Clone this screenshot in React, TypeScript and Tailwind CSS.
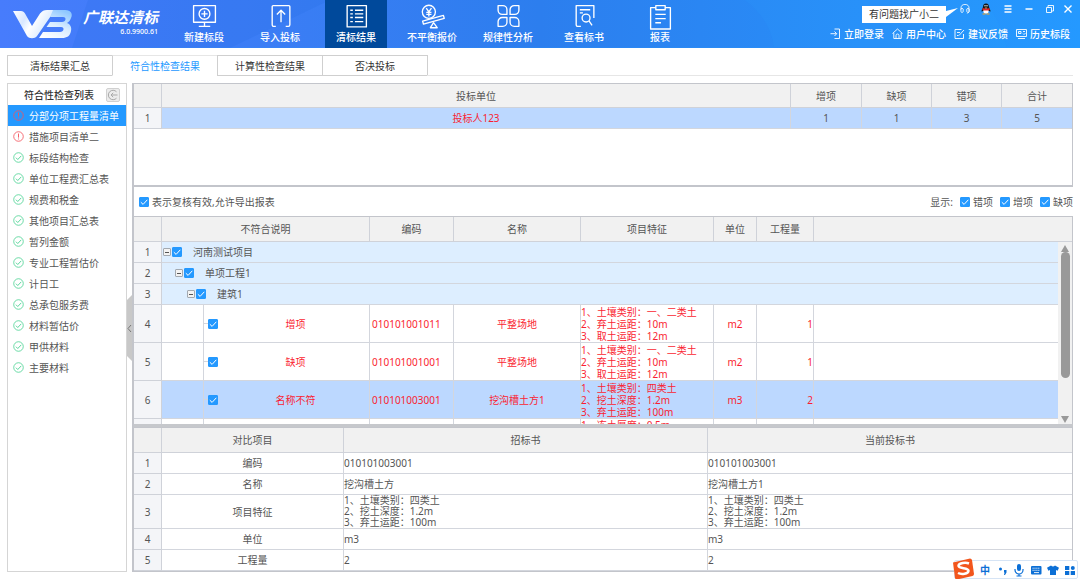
import { useState, type ReactNode } from "react";
import clsx from "clsx";

interface BillRow {
  id: number;
  reason: string;
  code: string;
  name: string;
  features: string[];
  unit: string;
  quantity: string;
}

const navItems = [
  { key: "new", label: "新建标段" },
  { key: "import", label: "导入投标" },
  { key: "result", label: "清标结果" },
  { key: "balance", label: "不平衡报价" },
  { key: "pattern", label: "规律性分析" },
  { key: "view", label: "查看标书" },
  { key: "report", label: "报表" }
];

const userLinks = [
  { key: "login", label: "立即登录" },
  { key: "home", label: "用户中心" },
  { key: "feedback", label: "建议反馈" },
  { key: "history", label: "历史标段" }
];

const tabs = ["清标结果汇总", "符合性检查结果", "计算性检查结果", "否决投标"];

const checks = [
  { label: "分部分项工程量清单", ok: false },
  { label: "措施项目清单二", ok: false },
  { label: "标段结构检查", ok: true },
  { label: "单位工程费汇总表", ok: true },
  { label: "规费和税金", ok: true },
  { label: "其他项目汇总表", ok: true },
  { label: "暂列金额", ok: true },
  { label: "专业工程暂估价", ok: true },
  { label: "计日工", ok: true },
  { label: "总承包服务费", ok: true },
  { label: "材料暂估价", ok: true },
  { label: "甲供材料", ok: true },
  { label: "主要材料", ok: true }
];

const treeRows = [
  { id: 1, label: "河南测试项目", indent: "pl-px" },
  { id: 2, label: "单项工程1", indent: "pl-[13px]" },
  { id: 3, label: "建筑1", indent: "pl-[25px]" }
];

const billRows: BillRow[] = [
  {
    id: 4,
    reason: "增项",
    code: "010101001011",
    name: "平整场地",
    features: ["1、土壤类别：一、二类土", "2、弃土运距：10m", "3、取土运距：12m"],
    unit: "m2",
    quantity: "1"
  },
  {
    id: 5,
    reason: "缺项",
    code: "010101001001",
    name: "平整场地",
    features: ["1、土壤类别：一、二类土", "2、弃土运距：10m", "3、取土运距：12m"],
    unit: "m2",
    quantity: "1"
  },
  {
    id: 6,
    reason: "名称不符",
    code: "010101003001",
    name: "挖沟槽土方1",
    features: ["1、土壤类别：四类土", "2、挖土深度：1.2m", "3、弃土运距：100m"],
    unit: "m3",
    quantity: "2"
  }
];

const compareRows = [
  { label: "编码", tender: ["010101003001"], bid: ["010101003001"] },
  { label: "名称", tender: ["挖沟槽土方"], bid: ["挖沟槽土方1"] },
  {
    label: "项目特征",
    tender: ["1、土壤类别：四类土", "2、挖土深度：1.2m", "3、弃土运距：100m"],
    bid: ["1、土壤类别：四类土", "2、挖土深度：1.2m", "3、弃土运距：100m"]
  },
  { label: "单位", tender: ["m3"], bid: ["m3"] },
  { label: "工程量", tender: ["2"], bid: ["2"] }
];

const cell = "border-r border-b border-[#d3d6dd]";
const headCell = "border-r border-b border-[#cfd2d9] bg-[#f1f1f1] font-normal";
const indexCell = "border-r border-b border-[#cfd2d9] bg-[#f4f5f8] text-center font-normal";

const navIcons: Record<string, ReactNode> = {
  new: (
    <>
      <path d="M1.5 1.5h21v16h-21zM12 17.5v3.5M6.500 21.500h11" />
      <circle cx="12" cy="9.500" r="5.200" />
      <path d="M12 6.500v6M9 9.500h6" />
    </>
  ),
  import: (
    <>
      <path d="M7.500 21.500H5.500a1.500 1.500 0 0 1-1.500-1.500V2.500A1 1 0 0 1 5 1.500h15a1 1 0 0 1 1 1v17.500a1.500 1.500 0 0 1-1.500 1.500H17" />
      <path d="M12.500 17.500V6M8.500 10l4-4 4 4" />
    </>
  ),
  result: (
    <>
      <path d="M3 1.500h18.500v20.500H3z" />
      <path d="M6 6h2.500M10.500 6H18.500M6 9.500h2.500M10.500 9.500H18.500M6 13h2.500M10.500 13H18.500M6 17h2.500M10.500 17H18.500" />
    </>
  ),
  balance: (
    <>
      <circle cx="8.500" cy="7.500" r="6.300" />
      <path d="M6 4l2.500 3.500L11 4M8.500 7.500v4.500M6 8h5M6 10h5" />
      <path d="M2.500 16.500L22.500 11l.8 2.800L3.300 19.300z" />
      <path d="M13 18l-3 4.800h6.500z" />
    </>
  ),
  pattern: (
    <>
      <path d="M2 1.500h4.500a4 4 0 0 1 4 4V10H6a4 4 0 0 1-4-4z" />
      <path d="M22 1.500h-4.500a4 4 0 0 0-4 4V10H18a4 4 0 0 0 4-4z" />
      <path d="M2 21.500h4.500a4 4 0 0 0 4-4V13H6a4 4 0 0 0-4 4z" />
      <path d="M22 21.500h-4.500a4 4 0 0 1-4-4V13H18a4 4 0 0 1 4 4z" />
    </>
  ),
  view: (
    <>
      <path d="M8.500 21.500H5.500a1.500 1.500 0 0 1-1.500-1.500V1.500h17v12" />
      <path d="M7.500 5.500h10M7.500 8.500h3" />
      <circle cx="13.500" cy="13.500" r="3.800" />
      <path d="M16.300 16.300l3 4.200" />
    </>
  ),
  report: (
    <>
      <path d="M7.500 3.500H2.500v20.500h19V3.500h-5" />
      <path d="M7.500 1.500h9v4h-9zM7 10h10M7 14h10M7 18h5.500" />
    </>
  )
};

const linkIcons: Record<string, ReactNode> = {
  login: <path d="M4.500 1h5v9.500h-5M.5 5.700h6M4.500 3.500l2.200 2.200-2.200 2.300" />,
  home: <path d="M.5 5.500L5.500 1l5 4.500M1.800 5v5.500h7.400V5M4 10.500V7.500a1.500 1.500 0 0 1 3 0v3" />,
  feedback: <path d="M7.500 1.500H1v9h8.500V6M3 4.500h3M3 7.500l1.500 0M5 7.500L10 2" />,
  history: (
    <path d="M.5 1.500h10v7H.5zM2 10.500h7M2.500 3.500h2.500v2H2.500zM7 3.500h2M7 5.500l1 1 1.500-1.500" />
  )
};

const Logo = () => (
  <svg viewBox="0 0 60 29" className="h-[29px] w-[60px]" aria-hidden="true">
    <defs>
      <linearGradient id="logo-v" x1="0" y1="0" x2="1" y2="0.4">
        <stop offset="0" stopColor="#ffffff" />
        <stop offset="0.35" stopColor="#d9e8ff" />
        <stop offset="0.55" stopColor="#ffffff" />
        <stop offset="1" stopColor="#cfe5ff" />
      </linearGradient>
      <linearGradient id="logo-b" x1="0.2" y1="1" x2="0.7" y2="0">
        <stop offset="0" stopColor="#ffffff" />
        <stop offset="0.5" stopColor="#d9edff" />
        <stop offset="1" stopColor="#8fc8ff" />
      </linearGradient>
    </defs>
    <path d="M0 1h8c2 0 3 1 4 2.500L19 16l8-12.500C29 1 31 0 34 0h8L24 26c-2 3-8 3-10 0z" fill="url(#logo-v)" />
    <path
      d="M40 0h12c6 0 8 4 6 8-.7 2-2 4-4 5 3 1 5 4 4 8-1 5-4 7-9 7H26l4-6h17c4 0 5-5 1-5H33.500l3.500-5H49c4 0 5-5 1-5H37z"
      fill="url(#logo-b)"
    />
  </svg>
);

const StatusIcon = ({ ok }: { ok: boolean }) => (
  <svg
    viewBox="0 0 12 12"
    className={clsx("size-[11px] shrink-0", ok ? "text-[#4cd394]" : "text-[#f4525c]")}
    fill="none"
    stroke="currentColor"
    aria-hidden="true"
  >
    <circle cx="6" cy="6" r="5.200" strokeWidth="0.900" />
    {ok ? <path d="M3.200 6.200l2 2 3.800-4" /> : <path d="M6 2.800v4.400M6 8.200v1" />}
  </svg>
);

const Check = ({ label, text }: { label: string; text?: boolean }) => (
  <label className="flex items-center gap-[3px]">
    <span className="relative block size-[10px] shrink-0">
      <input
        type="checkbox"
        defaultChecked
        aria-label={label}
        className="peer block size-[10px] appearance-none rounded-[1px] border border-[#2499ff] bg-white checked:bg-[#2499ff]"
      />
      <svg
        viewBox="0 0 10 10"
        className="pointer-events-none absolute inset-0 hidden size-[10px] peer-checked:block"
        fill="none"
        stroke="white"
        aria-hidden="true"
      >
        <path d="M1.800 5.200l2.300 2.200 4.200-4.600" />
      </svg>
    </span>
    {text && <span>{label}</span>}
  </label>
);

const TitleBar = () => {
  const [active, setActive] = useState("result");
  return (
    <header className="relative flex h-12 shrink-0 bg-linear-to-r from-[#477cfc] via-[#2c7eee] to-[#2499ff] text-white">
      {/* slanted lighter bands */}
      <svg
        viewBox="0 0 1080 48"
        preserveAspectRatio="none"
        className="pointer-events-none absolute inset-0 size-full"
        aria-hidden="true"
      >
        <path d="M88 0L72 48H230L330 0z" fill="#1d63dd" opacity="0.15" />
        <path d="M745 0q26 20 29 48H0V47H1080V48H1007q-8-30-22-48z" fill="#2ba2ff" opacity="0.14" />
      </svg>
      <div className="relative flex w-[173px] shrink-0 gap-2 pt-[10px] pl-[13px]">
        <Logo />
        <div className="flex w-[77px] flex-col items-end">
          <h1 className="text-[15px] leading-[15px] font-bold whitespace-nowrap italic">广联达清标</h1>
          <span className="text-[7px] leading-[14px] font-medium">6.0.9900.61</span>
        </div>
      </div>
      <nav className="relative flex gap-[14px]">
        {navItems.map((item) => (
          <button
            key={item.key}
            type="button"
            onClick={() => setActive(item.key)}
            className={clsx(
              "flex w-[62px] flex-col items-center pt-1 whitespace-nowrap",
              active === item.key && "bg-[#00499b]"
            )}
          >
            <svg
              viewBox="0 0 24 25"
              className="h-[26px] w-[25px]"
              fill="none"
              stroke="currentColor"
              strokeWidth="1.300"
              strokeLinejoin="round"
              aria-hidden="true"
            >
              {navIcons[item.key]}
            </svg>
            <span className="leading-[14px] font-medium">{item.label}</span>
          </button>
        ))}
      </nav>
      <div className="relative ml-auto flex flex-col items-end pr-[10px]">
        <div className="flex h-[25px] items-start pt-[3px]">
          <div className="relative mt-[3px] mr-[14px] bg-white px-[7px] leading-[17px] text-[#333]">
            有问题找广小二
            <svg
              viewBox="0 0 12 9"
              className="absolute top-[2px] -right-[12px] h-[9px] w-[12px]"
              aria-hidden="true"
            >
              <path d="M0 3L12 0 0 9z" fill="white" />
            </svg>
          </div>
          <button type="button" aria-label="客服" className="flex h-3 w-[10px]">
            <svg viewBox="0 0 11 12" fill="none" stroke="currentColor" strokeWidth="0.900">
              <path d="M1 6.500V5.500a4.500 4.500 0 0 1 9 0v3.500l-2 2M1 6a1.500 1.500 0 0 1 2.500 0v3A1.500 1.500 0 0 1 1 9zM10 6a1.500 1.500 0 0 0-2.500 0v3A1.500 1.500 0 0 0 10 9z" />
            </svg>
          </button>
          <button type="button" aria-label="QQ" className="ml-[11px] flex h-3 w-[10px]">
            <svg viewBox="0 0 10 12">
              <path d="M5 .5c2.200 0 3 1.700 3 3.500 0 1 1.500 2.500 1.500 4.500L8 8H2L.5 8.500C.5 6.500 2 5 2 4 2 2.200 2.800.5 5 .5z" fill="#14161c" />
              <ellipse cx="5" cy="8" rx="2.600" ry="2.600" fill="#fff" />
              <path d="M1.500 5q3.500 1.600 7 0v2q-3.500 1.200-7 0z" fill="#e6262b" />
              <circle cx="4" cy="2.800" r=".7" fill="#fff" />
              <circle cx="6" cy="2.800" r=".7" fill="#fff" />
              <path d="M3.500 4.200h3L5 5zM1.500 10.500h3v1h-3zM5.500 10.500h3v1h-3z" fill="#f7a11b" />
            </svg>
          </button>
          <button type="button" aria-label="菜单" className="ml-3 flex h-3 w-[10px]">
            <svg viewBox="0 0 10 12" stroke="currentColor" strokeWidth="1.500">
              <path d="M1.500 3h7M1.500 6h7M1.500 9h7" />
            </svg>
          </button>
          <button type="button" aria-label="最小化" className="ml-[11px] flex h-3 w-[10px]">
            <svg viewBox="0 0 10 12" stroke="currentColor" strokeWidth="1.500">
              <path d="M1.500 6h7" />
            </svg>
          </button>
          <button type="button" aria-label="还原" className="ml-[11px] flex h-3 w-[10px]">
            <svg viewBox="0 0 10 12" fill="none" stroke="currentColor" strokeWidth="0.900">
              <path d="M1.500 4.500h5v5h-5zM3 4.500v-2h5.500v5.500h-2" />
            </svg>
          </button>
          <button type="button" aria-label="关闭" className="-mr-[3px] ml-2 flex h-3 w-[10px]">
            <svg viewBox="0 0 10 12" stroke="currentColor" strokeWidth="1.400">
              <path d="M1.500 2.500l7 7M8.500 2.500l-7 7" />
            </svg>
          </button>
        </div>
        <div className="flex gap-2">
          {userLinks.map((link) => (
            <a key={link.key} href="#" className="flex items-center gap-[3px] leading-[18px] font-medium whitespace-nowrap">
              <svg viewBox="0 0 11 12" className="h-3 w-[11px]" fill="none" stroke="currentColor" strokeWidth="0.900" aria-hidden="true">
                {linkIcons[link.key]}
              </svg>
              {link.label}
            </a>
          ))}
        </div>
      </div>
    </header>
  );
};

const CheckList = () => {
  const [selected, setSelected] = useState(0);
  return (
    <aside className="w-[120px] shrink-0 border border-[#d5d5d5] bg-white">
      <div className="flex h-[21px] items-center justify-end gap-3 pr-[6px]">
        <h2 className="font-medium whitespace-nowrap text-[#333]">符合性检查列表</h2>
        <button
          type="button"
          aria-label="收起"
          className="flex size-[14px] items-center justify-center rounded-[2px] border border-[#d0d0d0] bg-[#ececec]"
        >
          <svg viewBox="0 0 12 12" className="size-3 shrink-0" fill="none" stroke="#a9a9a9" aria-hidden="true">
            <path d="M9.500 2.800a4.700 4.700 0 1 0 0 6.400M10.500 6H4M6.200 3.800L4 6l2.200 2.200" />
          </svg>
        </button>
      </div>
      <ul>
        {checks.map((item, index) => (
          <li key={item.label}>
            <button
              type="button"
              onClick={() => setSelected(index)}
              className={clsx(
                "flex h-[21px] w-full items-center gap-[5px] pl-[5px] text-left whitespace-nowrap",
                selected === index && "bg-[#2499ff] text-white"
              )}
            >
              <StatusIcon ok={item.ok} />
              {item.label}
            </button>
          </li>
        ))}
      </ul>
    </aside>
  );
};

const BidderTable = () => (
  <div className="h-[104px] shrink-0 border-t border-r border-b-2 border-[#c3c5cb] bg-white">
    <table className="w-full table-fixed border-separate border-spacing-0">
      <colgroup>
        <col className="w-[28px]" />
        <col />
        <col className="w-[71px]" />
        <col className="w-[70px]" />
        <col className="w-[70px]" />
        <col className="w-[70px]" />
      </colgroup>
      <thead>
        <tr className="h-6">
          <th className={headCell}></th>
          <th className={headCell}>投标单位</th>
          <th className={headCell}>增项</th>
          <th className={headCell}>缺项</th>
          <th className={headCell}>错项</th>
          <th className="border-b border-[#cfd2d9] bg-[#f1f1f1] font-normal">合计</th>
        </tr>
      </thead>
      <tbody>
        <tr className="h-[21px] bg-[#bcd8ff] text-center">
          <th className={indexCell}>1</th>
          <td className={clsx(cell, "text-[#fa1e32]")}>投标人123</td>
          <td className={cell}>1</td>
          <td className={cell}>1</td>
          <td className={cell}>3</td>
          <td className="border-b border-[#d3d6dd]">5</td>
        </tr>
      </tbody>
    </table>
  </div>
);

const BillTable = () => (
  <div className="relative min-h-0 flex-1 overflow-hidden border-t border-r border-[#c3c5cb] bg-white">
    <table className="w-full table-fixed border-separate border-spacing-0">
      <colgroup>
        <col className="w-[28px]" />
        <col className="w-[208px]" />
        <col className="w-[84px]" />
        <col className="w-[127px]" />
        <col className="w-[133px]" />
        <col className="w-[43px]" />
        <col className="w-[57px]" />
        <col />
      </colgroup>
      <thead>
        <tr className="h-[25px]">
          <th className={headCell}></th>
          <th className={headCell}>不符合说明</th>
          <th className={headCell}>编码</th>
          <th className={headCell}>名称</th>
          <th className={headCell}>项目特征</th>
          <th className={headCell}>单位</th>
          <th className={headCell}>工程量</th>
          <th className="border-b border-[#cfd2d9] bg-[#f1f1f1]"></th>
        </tr>
      </thead>
      <tbody>
        {treeRows.map((row) => (
          <tr key={row.id} className="h-[21px] bg-[#ddeeff]">
            <th className={indexCell}>{row.id}</th>
            <td colSpan={7} className="border-b border-[#d3d6dd]">
              <div className={clsx("flex items-center", row.indent)}>
                <button
                  type="button"
                  aria-label="折叠"
                  className="mr-px flex size-2 items-center justify-center rounded-[1px] border border-[#a3a9b0] bg-[#f3f3f3]"
                >
                  <span className="h-px w-1 shrink-0 bg-[#555]"></span>
                </button>
                <Check label={row.label} />
                <span className="pl-[11px]">{row.label}</span>
              </div>
            </td>
          </tr>
        ))}
        {billRows.map((row) => (
          <tr
            key={row.id}
            className={clsx("h-[38px] text-center text-[#fa1e32]", row.id === 6 && "bg-[#bcd8ff]")}
          >
            <th className={clsx(indexCell, "text-[#555]")}>{row.id}</th>
            <td className={cell}>
              <div className="ml-[41px] flex h-[37px] items-center border-l border-[#d3d6dd]">
                <span className="h-px w-1 bg-[#d3d6dd]"></span>
                <Check label={row.reason} />
                <span className="flex-1 pl-1">{row.reason}</span>
              </div>
            </td>
            <td className={clsx(cell, "pl-[2px] text-left")}>{row.code}</td>
            <td className={cell}>{row.name}</td>
            <td className={clsx(cell, "text-left leading-[12px] whitespace-nowrap")}>
              {row.features.map((line) => (
                <p key={line}>{line}</p>
              ))}
            </td>
            <td className={cell}>{row.unit}</td>
            <td className={clsx(cell, "text-right")}>{row.quantity}</td>
            <td className="border-b border-[#d3d6dd]"></td>
          </tr>
        ))}
        <tr className="h-[38px] text-[#fa1e32]">
          <th className={indexCell}></th>
          <td className={cell}>
            <div className="ml-[41px] h-[37px] border-l border-[#d3d6dd]"></div>
          </td>
          <td className={cell}></td>
          <td className={cell}></td>
          <td className={clsx(cell, "align-top leading-[12px]")}>1、冻土厚度：0.5m</td>
          <td className={cell}></td>
          <td className={cell}></td>
          <td></td>
        </tr>
      </tbody>
    </table>
    {/* scrollbar */}
    <div className="absolute top-[25px] right-0 bottom-0 flex w-[14px] flex-col items-center bg-[#f1f1f1] pt-[3px]">
      <svg viewBox="0 0 8 7" className="h-[7px] w-2" fill="#999" aria-hidden="true">
        <path d="M4 0l4 7H0z" />
      </svg>
      <div className="h-[126px] w-[9px] rounded-full bg-[#999]"></div>
      <svg viewBox="0 0 8 7" className="mt-auto mb-px h-[7px] w-2" fill="#999" aria-hidden="true">
        <path d="M4 7L0 0h8z" />
      </svg>
    </div>
  </div>
);

const CompareTable = () => (
  <div className="shrink-0 border-t border-r border-b border-[#c3c5cb] bg-white">
    <table className="w-full table-fixed border-separate border-spacing-0">
      <colgroup>
        <col className="w-[28px]" />
        <col className="w-[182px]" />
        <col />
        <col />
      </colgroup>
      <thead>
        <tr className="h-[25px]">
          <th className={headCell}></th>
          <th className={headCell}>对比项目</th>
          <th className={headCell}>招标书</th>
          <th className="border-b border-[#cfd2d9] bg-[#f1f1f1] font-normal">当前投标书</th>
        </tr>
      </thead>
      <tbody>
        {compareRows.map((row, index) => (
          <tr key={row.label} className="h-[21px]">
            <th className={indexCell}>{index + 1}</th>
            <td className={clsx(cell, "text-center")}>{row.label}</td>
            <td className={clsx(cell, "leading-[11px]")}>
              {row.tender.map((line) => (
                <p key={line}>{line}</p>
              ))}
            </td>
            <td className="border-b border-[#d3d6dd] leading-[11px]">
              {row.bid.map((line) => (
                <p key={line}>{line}</p>
              ))}
            </td>
          </tr>
        ))}
      </tbody>
    </table>
  </div>
);

const InputBar = () => (
  <div className="absolute right-[2px] bottom-0 flex h-[19px] items-center rounded-[2px] border border-[#d6e4f5] bg-white pr-px pl-[25px] text-[#0b6fd6]">
    <svg viewBox="0 0 22 22" className="absolute -top-[3px] -left-[3px] size-[22px]" aria-hidden="true">
      <path d="M1 4.500L18 .5q1.500 0 2 1.500l2 14q0 1.500-1.500 2L5 21.500q-1.500 0-2-1.500z" fill="#f2561d" />
      <path
        d="M17 5.500c-3-1.200-10-.8-10.500 2.200-.4 3.300 10 1.800 10 5 0 3.300-7 4-10.500 2.300"
        fill="none"
        stroke="#fff"
        strokeWidth="2.500"
      />
    </svg>
    <span className="w-[14px] leading-[14px] font-bold">中</span>
    <svg viewBox="0 0 78 14" className="ml-1 h-[14px] w-[78px]" fill="currentColor" aria-hidden="true">
      <circle cx="2.500" cy="6" r="1.500" />
      <path d="M6 7h2.500v2.500L7 12H6l.6-2.500H6z" />
      <rect x="19" y="1" width="4" height="7" rx="2" />
      <path d="M17 6v1a4 4 0 0 0 8 0V6M21 11v2M18.500 13h5" fill="none" stroke="currentColor" strokeWidth="1.200" />
      <rect x="33" y="3" width="10.500" height="8.500" rx="1" />
      <path d="M34.500 5.200h7.500M34.500 7.300h7.500" stroke="#fff" strokeWidth=".9" strokeDasharray="1.200 .7" />
      <path d="M36 9.600h5" stroke="#fff" strokeWidth=".9" />
      <path d="M53 2.500q2 1.800 4 0l4 2.200-1.400 3-1.600-.6V12h-6V7.100l-1.600.6-1.400-3z" />
      <path d="M67 3h4.300v4H67zM67 8h4.300v4H67zM72.700 8H77v4h-4.300z" />
      <circle cx="74.800" cy="5" r="2" />
    </svg>
  </div>
);

const App = () => {
  const [activeTab, setActiveTab] = useState(tabs[1]);
  return (
    <div
      lang="zh-CN"
      className="relative flex h-screen flex-col overflow-hidden bg-white font-['Noto_Sans','Noto_Sans_CJK_SC',sans-serif] text-[10px] leading-[14px] text-[#555]"
    >
      <TitleBar />
      <div className="flex shrink-0 px-[7px] pt-[7px]">
        {tabs.map((tab) => (
          <button
            key={tab}
            type="button"
            onClick={() => setActiveTab(tab)}
            className={clsx(
              "-mr-px h-[21px] w-[106px] border border-[#cfcfcf] whitespace-nowrap",
              activeTab === tab ? "border-t-[#e6e6e6] border-b-white text-[#2499ff]" : "text-[#333]"
            )}
          >
            {tab}
          </button>
        ))}
        <div className="flex-1 border-b border-[#e6e6e6]"></div>
      </div>
      <main className="flex min-h-0 flex-1 px-[7px] pt-[7px] pb-[7px]">
        <CheckList />
        <button type="button" aria-label="收起列表" className="flex w-[5px] shrink-0 items-center justify-center">
          <svg viewBox="0 0 5 66" className="h-[66px] w-[5px]" aria-hidden="true">
            <path d="M0 5L5 0v66L0 61z" fill="#c8c8c8" />
            <path d="M4 30L1 33.500 4 37" fill="none" stroke="#777" />
          </svg>
        </button>
        <section className="flex min-w-0 flex-1 flex-col border-l-2 border-[#c3c5cb]">
          <BidderTable />
          <div className="flex h-[29px] shrink-0 items-center justify-between pl-[5px]">
            <Check label="表示复核有效,允许导出报表" text />
            <div className="flex items-center gap-[7px]">
              <span>显示:</span>
              <Check label="错项" text />
              <Check label="增项" text />
              <Check label="缺项" text />
            </div>
          </div>
          <BillTable />
          <div className="h-[3px] shrink-0 bg-[#c6c8cc]"></div>
          <CompareTable />
        </section>
      </main>
      <InputBar />
    </div>
  );
};

export default App;
